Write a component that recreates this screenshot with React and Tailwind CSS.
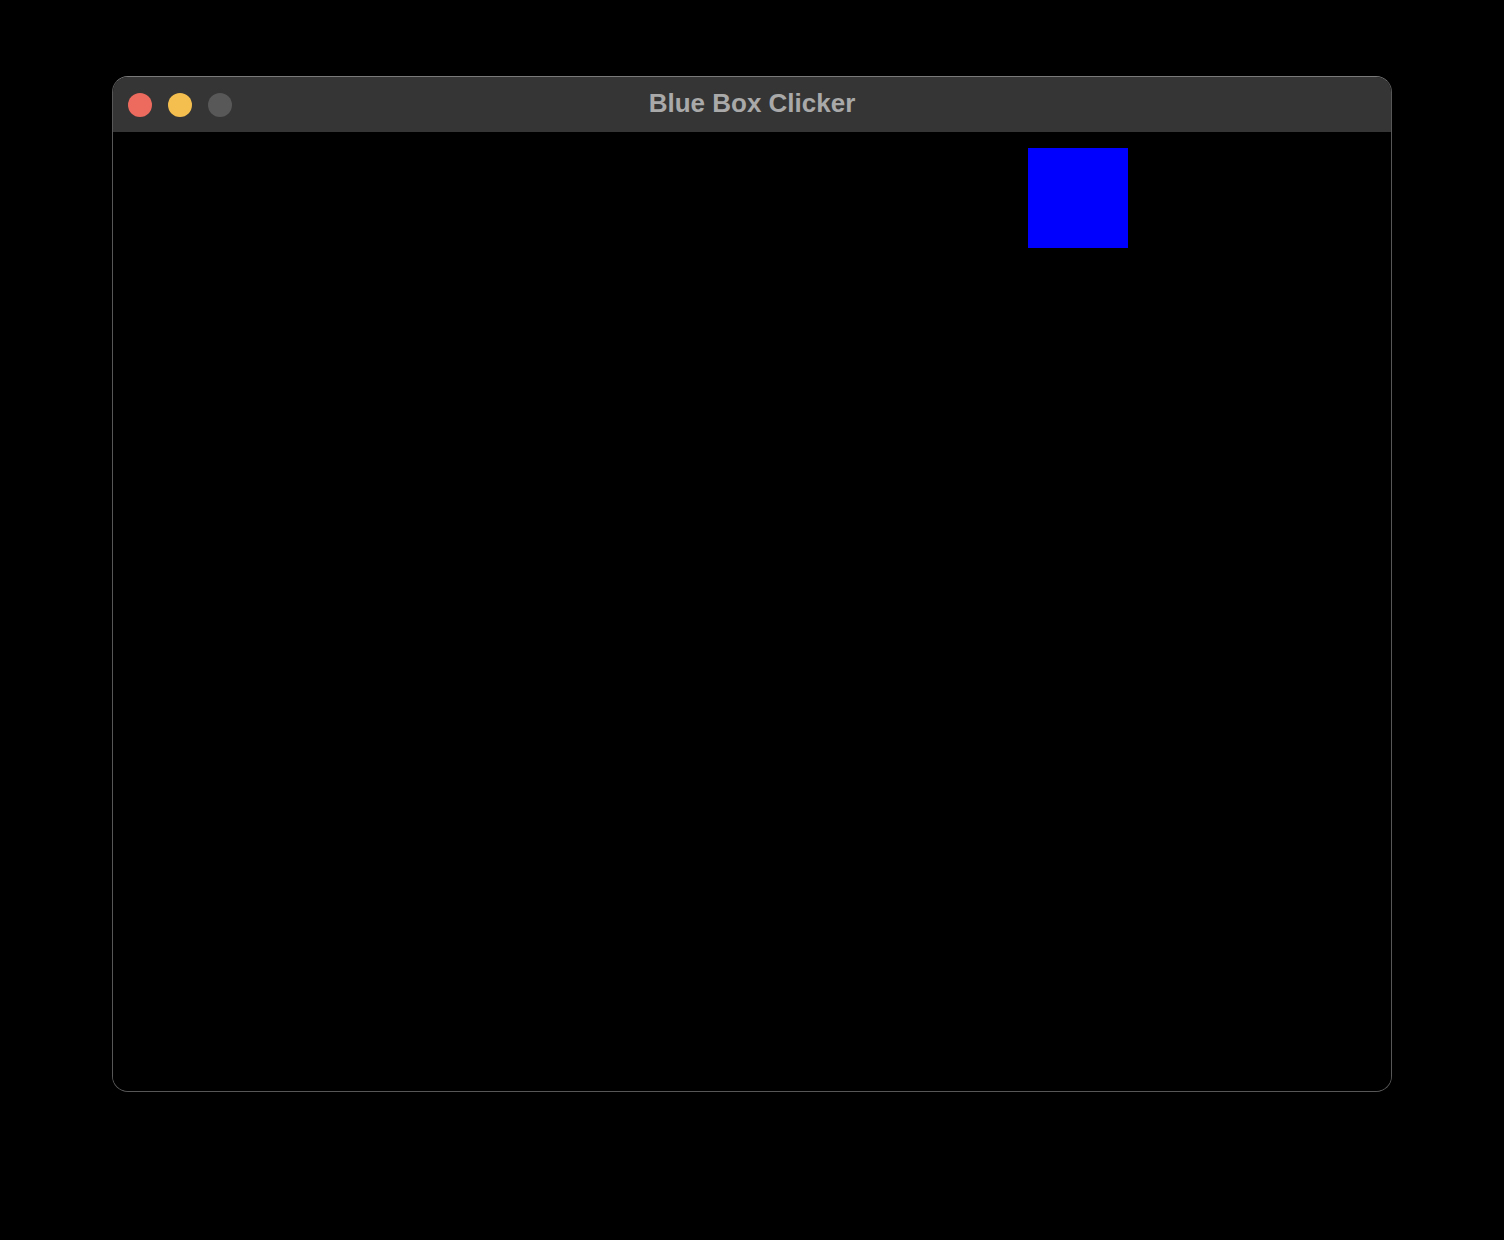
export default function App() {
  return (
    <div className="min-h-[1240px] w-full bg-black pt-[76px] pl-[112px]">
      {/* Window */}
      <div className="w-[1280px] h-[1016px] rounded-[16px] border border-[#575757] border-t-[#7a7a7a] overflow-hidden flex flex-col bg-black">
        {/* Title bar */}
        <div className="relative h-[55px] shrink-0 bg-[#353535] flex items-center">
          <div className="flex items-center gap-[16px] pl-[15px]">
            <div className="w-[24px] h-[24px] rounded-full bg-[#ec6a5e]" />
            <div className="w-[24px] h-[24px] rounded-full bg-[#f4bf4f]" />
            <div className="w-[24px] h-[24px] rounded-full bg-[#585858]" />
          </div>
          <div
            className="absolute inset-0 pb-[2px] flex items-center justify-center text-[26px] font-bold text-[#a9a9a9] pointer-events-none"
            style={{ fontFamily: '"Liberation Sans", Arial, sans-serif' }}
          >
            Blue Box Clicker
          </div>
        </div>
        {/* Canvas */}
        <div className="relative flex-1 bg-black">
          <div className="absolute left-[915px] top-[16px] w-[100px] h-[100px] bg-[#0000ff]" />
        </div>
      </div>
    </div>
  );
}
